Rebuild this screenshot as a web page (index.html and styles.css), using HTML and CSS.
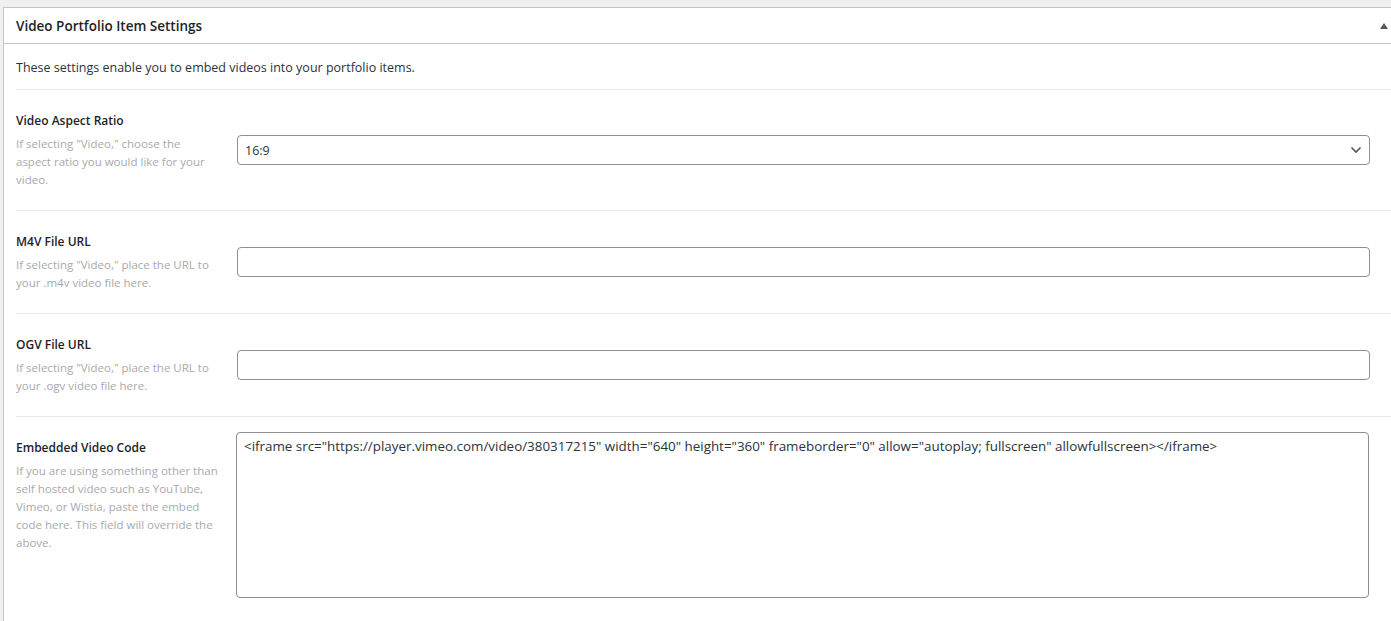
FILE: index.html
```html
<!DOCTYPE html>
<html lang="en">
<head>
    <meta charset="UTF-8">
    <meta name="viewport" content="width=device-width, initial-scale=1.0">
    <title>Video Portfolio Item Settings</title>
    <link rel="stylesheet" href="styles.css">
</head>
<body>
    <div class="postbox">
        <div class="postbox-header">
            <h2>Video Portfolio Item Settings</h2>
            <span class="toggle-arrow"></span>
        </div>

        <div class="inside">
            <p class="intro">These settings enable you to embed videos into your portfolio items.</p>

            <div class="field-row">
                <div class="field-label">
                    <label for="videoRatio">Video Aspect Ratio</label>
                    <p class="desc">If selecting "Video," choose the<br>aspect ratio you would like for your video.</p>
                </div>
                <div class="field-input">
                    <div class="select-wrap">
                        <select id="videoRatio">
                            <option>16:9</option>
                            <option>4:3</option>
                        </select>
                        <svg class="chevron" width="12" height="8" viewBox="0 0 12 8">
                            <path d="M1.5 1.5 L6 6 L10.5 1.5" fill="none" stroke="#50575e" stroke-width="1.6"/>
                        </svg>
                    </div>
                </div>
            </div>

            <div class="field-row">
                <div class="field-label">
                    <label for="m4vUrl">M4V File URL</label>
                    <p class="desc">If selecting "Video," place the URL to your .m4v video file here.</p>
                </div>
                <div class="field-input">
                    <input type="text" id="m4vUrl">
                </div>
            </div>

            <div class="field-row">
                <div class="field-label">
                    <label for="ogvUrl">OGV File URL</label>
                    <p class="desc">If selecting "Video," place the URL to your .ogv video file here.</p>
                </div>
                <div class="field-input">
                    <input type="text" id="ogvUrl">
                </div>
            </div>

            <div class="field-row">
                <div class="field-label">
                    <label for="embedCode">Embedded Video Code</label>
                    <p class="desc">If you are using something other than self hosted video such as YouTube, Vimeo, or Wistia, paste the embed code here. This field will override the above.</p>
                </div>
                <div class="field-input">
                    <textarea id="embedCode" class="code-area">&lt;iframe src="https://player.vimeo.com/video/380317215" width="640" height="360" frameborder="0" allow="autoplay; fullscreen" allowfullscreen&gt;&lt;/iframe&gt;</textarea>
                </div>
            </div>
        </div>
    </div>
</body>
</html>
```

FILE: styles.css
```css
/* General */
body {
    margin: 0;
    background-color: #f0f0f1;
    font-family: "Open Sans", "Noto Sans", sans-serif;
    color: #3c434a;
    overflow: hidden;
}
/* Meta box */
.postbox {
    margin: 7px 0 0 3px;
    background: #fff;
    border: 1px solid #c3c4c7;
    border-right: none;
}
.postbox-header {
    display: flex;
    justify-content: space-between;
    align-items: center;
    height: 35px;
    padding: 0 12px;
    border-bottom: 1px solid #c3c4c7;
}
.postbox-header h2 {
    margin: 0;
    font-size: 13.5px;
    font-weight: 600;
    color: #1d2327;
}
.toggle-arrow {
    width: 0;
    height: 0;
    margin-right: -9px;
    border-left: 4px solid transparent;
    border-right: 4px solid transparent;
    border-bottom: 6px solid #50575e;
}
.inside {
    padding: 0 0 20px 12px;
}
.intro {
    margin: 0;
    padding: 15px 0 12px;
    font-size: 12.5px;
    line-height: 18px;
    color: #2c3338;
}
/* Rows */
.field-row {
    display: flex;
    align-items: flex-start;
    border-top: 1px solid #ebebeb;
}
.field-label {
    width: 204px;
    flex-shrink: 0;
    padding: 22px 17px 21px 0;
}
.field-label label {
    display: block;
    margin-bottom: 5px;
    font-size: 12px;
    font-weight: 600;
    line-height: 18px;
    color: #1d2327;
}
.desc {
    margin: 0;
    font-size: 11.5px;
    line-height: 18px;
    color: #a7aaad;
}
.field-input {
    flex: 1;
    align-self: center;
    padding: 15px 21px 15px 0;
}
/* Inputs */
input,
select,
textarea {
    display: block;
    width: 100%;
    box-sizing: border-box;
    margin: 0;
    border: 1px solid #8c8f94;
    border-radius: 4px;
    background: #fff;
    font-family: "Open Sans", "Noto Sans", sans-serif;
    font-size: 12.5px;
    color: #2c3338;
}
input {
    height: 30px;
    padding: 0 8px;
}
.select-wrap {
    position: relative;
}
select {
    height: 30px;
    padding: 0 24px 0 7px;
    appearance: none;
    -webkit-appearance: none;
}
.chevron {
    position: absolute;
    right: 8px;
    top: 11px;
}
.code-area {
    height: 166px;
    margin-left: -1px;
    padding: 4px 7px;
    font-size: 13.4px;
    line-height: 18px;
    resize: none;
}
```
